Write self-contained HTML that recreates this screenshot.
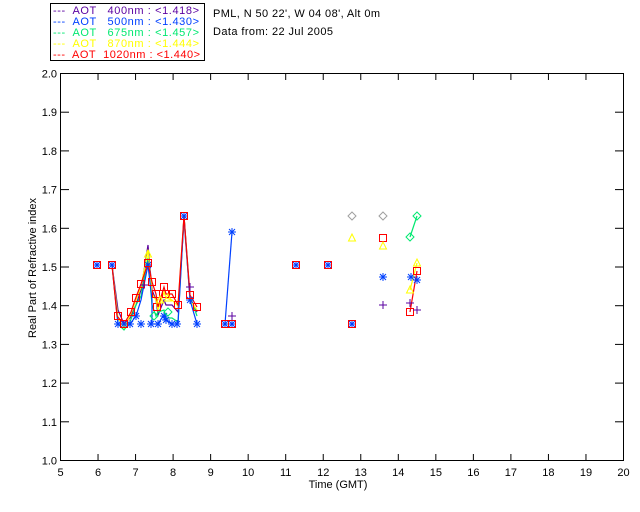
<!DOCTYPE html>
<html><head><meta charset="utf-8"><style>
html,body{margin:0;padding:0;background:#fff}
svg{display:block}
text{font-family:"Liberation Sans",sans-serif;font-size:11px;white-space:pre}
</style></head><body>
<svg width="640" height="512" viewBox="0 0 640 512" xmlns="http://www.w3.org/2000/svg" xml:space="preserve">
<rect width="640" height="512" fill="#fff"/>
<rect x="50.5" y="3.5" width="154" height="57" fill="none" stroke="#000"/>
<g font-size="11">
<text x="53" y="14" fill="#5a00a0" textLength="146" lengthAdjust="spacing">---  AOT   400nm : &lt;1.418&gt;</text>
<text x="53" y="25" fill="#0040ff" textLength="146" lengthAdjust="spacing">---  AOT   500nm : &lt;1.430&gt;</text>
<text x="53" y="36" fill="#00e870" textLength="146" lengthAdjust="spacing">---  AOT   675nm : &lt;1.457&gt;</text>
<text x="53" y="47" fill="#ffff00" textLength="146" lengthAdjust="spacing">---  AOT   870nm : &lt;1.444&gt;</text>
<text x="53" y="58" fill="#ff0000" textLength="147" lengthAdjust="spacing">---  AOT  1020nm : &lt;1.440&gt;</text>
</g>
<text x="213" y="17" fill="#000" textLength="167" lengthAdjust="spacing">PML, N 50 22', W 04 08', Alt 0m</text>
<text x="213" y="35" fill="#000" textLength="120" lengthAdjust="spacing">Data from: 22 Jul 2005</text>
<rect x="60.5" y="73.5" width="563" height="387" fill="none" stroke="#000"/>
<g stroke="#000" id="ticks"></g>
<g font-size="10" fill="#000" text-anchor="end" id="ylab"></g>
<g font-size="10" fill="#000" text-anchor="middle" id="xlab"></g>
<text x="338" y="488" text-anchor="middle" font-size="10">Time (GMT)</text>
<text transform="translate(36,268) rotate(-90)" text-anchor="middle" font-size="10">Real Part of Refractive index</text>
<g fill="none" stroke-width="1.2">
<polyline stroke="#5a00a0" points="112,265 118,310 124,324 130,318 136,305 141,290 148,245 152,290 156,300 158,315 164,300 166,305 172,305 178,312 184,220 190,298 197,312"/>
<polyline stroke="#00e870" points="112,265 118,324 124,330 130,322 136,305 141,296 148,258 152,305 156,316 158,312 164,310 166,318 172,318 178,322 184,216 190,296 197,316"/>
<polyline stroke="#ffff00" points="112,265 118,318 124,328 130,316 136,300 141,287 148,250 152,294 156,300 158,310 164,292 166,298 172,300 178,306 184,216 190,300 197,310"/>
<polyline stroke="#0040ff" points="112,265 118,324 124,324 130,324 136,316 141,300 148,265 152,300 152,324 158,324 163,316 166,320 172,324 178,324 184,216 190,300 197,324"/>
<polyline stroke="#ff0000" points="112,265 117,316 124,324 131,312 135,300 141,284 148,263 152,282 156,294 158,307 164,287 166,294 172,294 178,305 184,216 190,295 197,307"/>
<polyline stroke="#0040ff" points="225,324 232,232"/>
<polyline stroke="#00e870" points="417,216 410,237"/>
<polyline stroke="#ffff00" points="417,263 410,290"/>
<polyline stroke="#ff0000" points="417,271 410,312"/>
</g>
<g id="marks" fill="none" stroke-width="1"></g>
</svg>
<script>
const ns="http://www.w3.org/2000/svg";
function el(p,t,a,txt){const e=document.createElementNS(ns,t);for(const k in a)e.setAttribute(k,a[k]);if(txt!==undefined)e.textContent=txt;document.getElementById(p).appendChild(e);}
for(let h=5;h<=20;h++){const x=60.5+(h-5)*563/15;
 if(h>5&&h<20){el("ticks","line",{x1:x,y1:460,x2:x,y2:454});el("ticks","line",{x1:x,y1:74,x2:x,y2:80});}
 el("xlab","text",{x:x,y:476},String(h));}
for(let i=0;i<=10;i++){const y=460.5-i*38.7;const v=(1+i/10).toFixed(1);
 if(i>0&&i<10){el("ticks","line",{x1:61,y1:y,x2:69,y2:y});el("ticks","line",{x1:623,y1:y,x2:615,y2:y});}
 el("ylab","text",{x:57,y:y+4},v);}
function star(x,y,c){for(const [dx,dy] of [[4,0],[0,4],[3,3],[3,-3]])el("marks","line",{x1:x-dx,y1:y-dy,x2:x+dx,y2:y+dy,stroke:c});}
function sq(x,y,c){el("marks","rect",{x:x-3.5,y:y-3.5,width:7,height:7,stroke:c});}
function tri(x,y,c){el("marks","polygon",{points:`${x-3.5},${y+3} ${x+3.5},${y+3} ${x},${y-4}`,stroke:c});}
function dia(x,y,c){el("marks","polygon",{points:`${x},${y-4} ${x+4},${y} ${x},${y+4} ${x-4},${y}`,stroke:c});}
function plus(x,y,c){el("marks","line",{x1:x-4,y1:y,x2:x+4,y2:y,stroke:c});el("marks","line",{x1:x,y1:y-4,x2:x,y2:y+4,stroke:c});}
const B="#0040ff",R="#ff0000",Y="#ffff00",G="#00e870",P="#5a00a0";
[[118,324],[124,324],[130,324],[141,324],[151,324],[158,324],[172,324],[177,324],[197,324],[148,265],[136,316],[164,316],[166,320],[190,300],[184,216],[232,232],[411,277],[417,280],[383,277],[352,324],[225,324],[97,265],[112,265],[296,265],[328,265],[232,324]].forEach(p=>star(p[0],p[1],B));
[[97,265],[112,265],[118,316],[124,324],[131,312],[136,298],[141,284],[148,263],[152,282],[156,294],[157,307],[164,287],[166,294],[172,294],[178,305],[184,216],[190,295],[197,307],[225,324],[232,324],[296,265],[328,265],[352,324],[383,238],[417,271],[410,312]].forEach(p=>sq(p[0],p[1],R));
[[352,238],[383,246],[417,263],[410,290],[148,254],[160,300],[168,298]].forEach(p=>tri(p[0],p[1],Y));
[[352,216],[383,216]].forEach(p=>dia(p[0],p[1],"#a0a0a0"));
[[417,216],[410,237],[154,316],[168,312]].forEach(p=>dia(p[0],p[1],G));
[[383,305],[410,303],[417,310],[232,316],[144,285],[190,287]].forEach(p=>plus(p[0],p[1],P));
</script>
</body></html>
